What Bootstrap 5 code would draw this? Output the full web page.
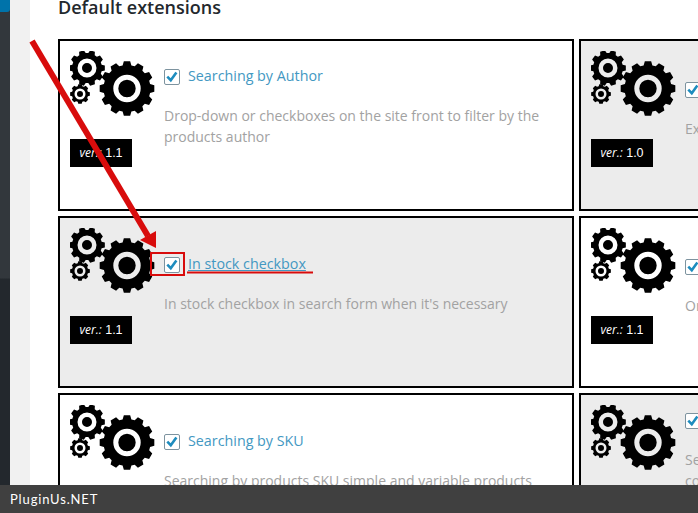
<!DOCTYPE html>
<html lang="en">
<head>
    <meta charset="UTF-8">
    <title>Default extensions</title>
    <link href="https://cdn.jsdelivr.net/npm/bootstrap@5.3.3/dist/css/bootstrap.min.css" rel="stylesheet">
    <style>
        html, body { height: 513px; overflow: hidden; }
        body { font-family: "Open Sans", sans-serif; font-size: 14px; line-height: 21px; background: #fff; }
        .page-wrap { width: 698px; height: 513px; overflow: hidden; position: relative; }
        .side-dark { width: 10px; flex: none; background: linear-gradient(#32373c 0, #32373c 278px, #23282d 279px); }
        .side-logo { height: 12px; background: #0073aa; border-bottom-right-radius: 3px; }
        .side-light { width: 20px; flex: none; background: #f1f1f1; }
        .main-area { width: 668px; flex: none; padding-left: 28px; }
        .page-title { height: 39px; margin: 0; font-family: "Open Sans", sans-serif; font-size: 18px; line-height: 14px; font-weight: 600; color: #23282d; white-space: nowrap; }
        .ext-grid { display: grid; grid-template-columns: 516px 516px; grid-auto-rows: 172px; gap: 5px; }
        .ext-box { border: 2px solid #000; padding: 10px; background: #fff; overflow: hidden; height: 172px; }
        .ext-box.shaded { background: #ececec; }
        .ext-left { width: 94px; flex: none; }
        .gears { display: block; width: 85px; height: 66px; margin-bottom: 22px; }
        .ver-tag { display: block; width: 62px; height: 28px; background: #000; color: #fff; font-family: "Liberation Sans", sans-serif; font-size: 12.5px; line-height: 28px; text-align: center; white-space: nowrap; }
        .ver-tag i { font-family: "Open Sans", sans-serif; font-size: 12px; }
        .ext-text { width: 392px; flex: none; }
        .ext-title { display: flex; align-items: center; gap: 8px; height: 16px; white-space: nowrap; }
        .ext-title a { color: #4398c2; text-decoration: none; font-size: 14.3px; line-height: 16px; padding-bottom: 3px; }
        .ext-title a.hovered { text-decoration: underline; }
        .tick { width: 16px; height: 16px; flex: none; border: 1px solid #7d939f; border-radius: 2px; background: #fff; display: block; }
        .ext-desc { margin: 20px 0 0; color: #a2a2a2; }
        .off-18 { padding-top: 18px; }
        .off-29 { padding-top: 29px; }
        .off-20 { padding-top: 8px; }
        .off-31 { padding-top: 31px; }
        .marks { position: absolute; left: 0; top: 0; width: 698px; height: 513px; pointer-events: none; }
        .brand-bar { position: absolute; left: 0; right: 0; bottom: 0; height: 28px; background: #404040; color: #fff; font-family: Lato, sans-serif; font-size: 13px; line-height: 28px; padding-left: 10px; letter-spacing: .85px; }
    </style>
</head>
<body>
    <svg width="0" height="0" class="position-absolute">
        <defs>
            <symbol id="gear-set" viewBox="0 0 85 66">
                <path id="gear-big" fill-rule="evenodd"/>
                <path id="gear-top" fill-rule="evenodd"/>
                <path id="gear-small" fill-rule="evenodd"/>
            </symbol>
            <symbol id="tick-mark" viewBox="0 0 16 16">
                <path d="M2.6 7.6 L6.6 11.6 L13 2.8" fill="none" stroke="#1e8cbe" stroke-width="3"/>
            </symbol>
        </defs>
    </svg>

    <div class="page-wrap d-flex">
        <div class="side-dark"><div class="side-logo"></div></div>
        <div class="side-light"></div>
        <div class="main-area">
            <h3 class="page-title">Default extensions</h3>
            <div class="ext-grid">

                <div class="ext-box d-flex">
                    <div class="ext-left">
                        <svg class="gears"><use href="#gear-set"/></svg>
                        <span class="ver-tag"><i>ver.:</i> 1.1</span>
                    </div>
                    <div class="ext-text off-18">
                        <div class="ext-title"><svg class="tick"><use href="#tick-mark"/></svg><a href="#">Searching by Author</a></div>
                        <p class="ext-desc">Drop-down or checkboxes on the site front to filter by the products author</p>
                    </div>
                </div>

                <div class="ext-box shaded d-flex">
                    <div class="ext-left">
                        <svg class="gears"><use href="#gear-set"/></svg>
                        <span class="ver-tag"><i>ver.:</i> 1.0</span>
                    </div>
                    <div class="ext-text off-31">
                        <div class="ext-title"><svg class="tick"><use href="#tick-mark"/></svg></div>
                        <p class="ext-desc">Ex</p>
                    </div>
                </div>

                <div class="ext-box shaded d-flex">
                    <div class="ext-left">
                        <svg class="gears"><use href="#gear-set"/></svg>
                        <span class="ver-tag"><i>ver.:</i> 1.1</span>
                    </div>
                    <div class="ext-text off-29">
                        <div class="ext-title"><svg class="tick"><use href="#tick-mark"/></svg><a href="#" class="hovered">In stock checkbox</a></div>
                        <p class="ext-desc">In stock checkbox in search form when it's necessary</p>
                    </div>
                </div>

                <div class="ext-box d-flex">
                    <div class="ext-left">
                        <svg class="gears"><use href="#gear-set"/></svg>
                        <span class="ver-tag"><i>ver.:</i> 1.1</span>
                    </div>
                    <div class="ext-text off-31">
                        <div class="ext-title"><svg class="tick"><use href="#tick-mark"/></svg></div>
                        <p class="ext-desc">Or</p>
                    </div>
                </div>

                <div class="ext-box d-flex">
                    <div class="ext-left">
                        <svg class="gears"><use href="#gear-set"/></svg>
                        <span class="ver-tag"><i>ver.:</i> 1.1</span>
                    </div>
                    <div class="ext-text off-29">
                        <div class="ext-title"><svg class="tick"><use href="#tick-mark"/></svg><a href="#">Searching by SKU</a></div>
                        <p class="ext-desc">Searching by products SKU simple and variable products</p>
                    </div>
                </div>

                <div class="ext-box shaded d-flex">
                    <div class="ext-left">
                        <svg class="gears"><use href="#gear-set"/></svg>
                        <span class="ver-tag"><i>ver.:</i> 1.1</span>
                    </div>
                    <div class="ext-text off-20">
                        <div class="ext-title"><svg class="tick"><use href="#tick-mark"/></svg></div>
                        <p class="ext-desc">Se<br>co</p>
                    </div>
                </div>

            </div>
        </div>

        <!-- red annotation drawn over the screenshot -->
        <svg class="marks" viewBox="0 0 698 513">
            <line x1="32" y1="41" x2="148" y2="236" stroke="#d80c0c" stroke-width="6"/>
            <polygon points="156,248 140,240 156,231" fill="#d80c0c"/>
            <rect x="151" y="253" width="33" height="22" fill="none" stroke="#d80c0c" stroke-width="2"/>
            <line x1="187" y1="272.5" x2="313" y2="272.5" stroke="#d80c0c" stroke-width="2"/>
        </svg>

        <div class="brand-bar">PluginUs.NET</div>
    </div>

    <script>
        // gear outline with tapered teeth, plus ring hole and centre dot
        function circlePath(cx, cy, r) {
            return `M${cx - r} ${cy}a${r} ${r} 0 1 0 ${r * 2} 0a${r} ${r} 0 1 0 ${-r * 2} 0z`;
        }

        function gearPath(cx, cy, outer, root, teeth, hole, dot) {
            const step = Math.PI * 2 / teeth;
            const pts = [];
            for (let i = 0; i < teeth; i++) {
                const a = i * step;
                [[root, -0.36], [outer, -0.22], [outer, 0.22], [root, 0.36]].forEach(([r, k]) => {
                    const t = a + k * step;
                    pts.push((cx + r * Math.cos(t)).toFixed(2) + ' ' + (cy + r * Math.sin(t)).toFixed(2));
                });
            }
            return 'M' + pts.join('L') + 'z' + circlePath(cx, cy, hole) + circlePath(cx, cy, dot);
        }

        document.getElementById('gear-big').setAttribute('d', gearPath(57, 37.5, 27.5, 23.5, 12, 13.7, 8.7));
        document.getElementById('gear-top').setAttribute('d', gearPath(17, 17, 18, 15, 10, 9.5, 5));
        document.getElementById('gear-small').setAttribute('d', gearPath(10, 43, 10, 8.2, 8, 5.5, 3));
    </script>
    <script src="https://cdn.jsdelivr.net/npm/bootstrap@5.3.3/dist/js/bootstrap.bundle.min.js"></script>
</body>
</html>
